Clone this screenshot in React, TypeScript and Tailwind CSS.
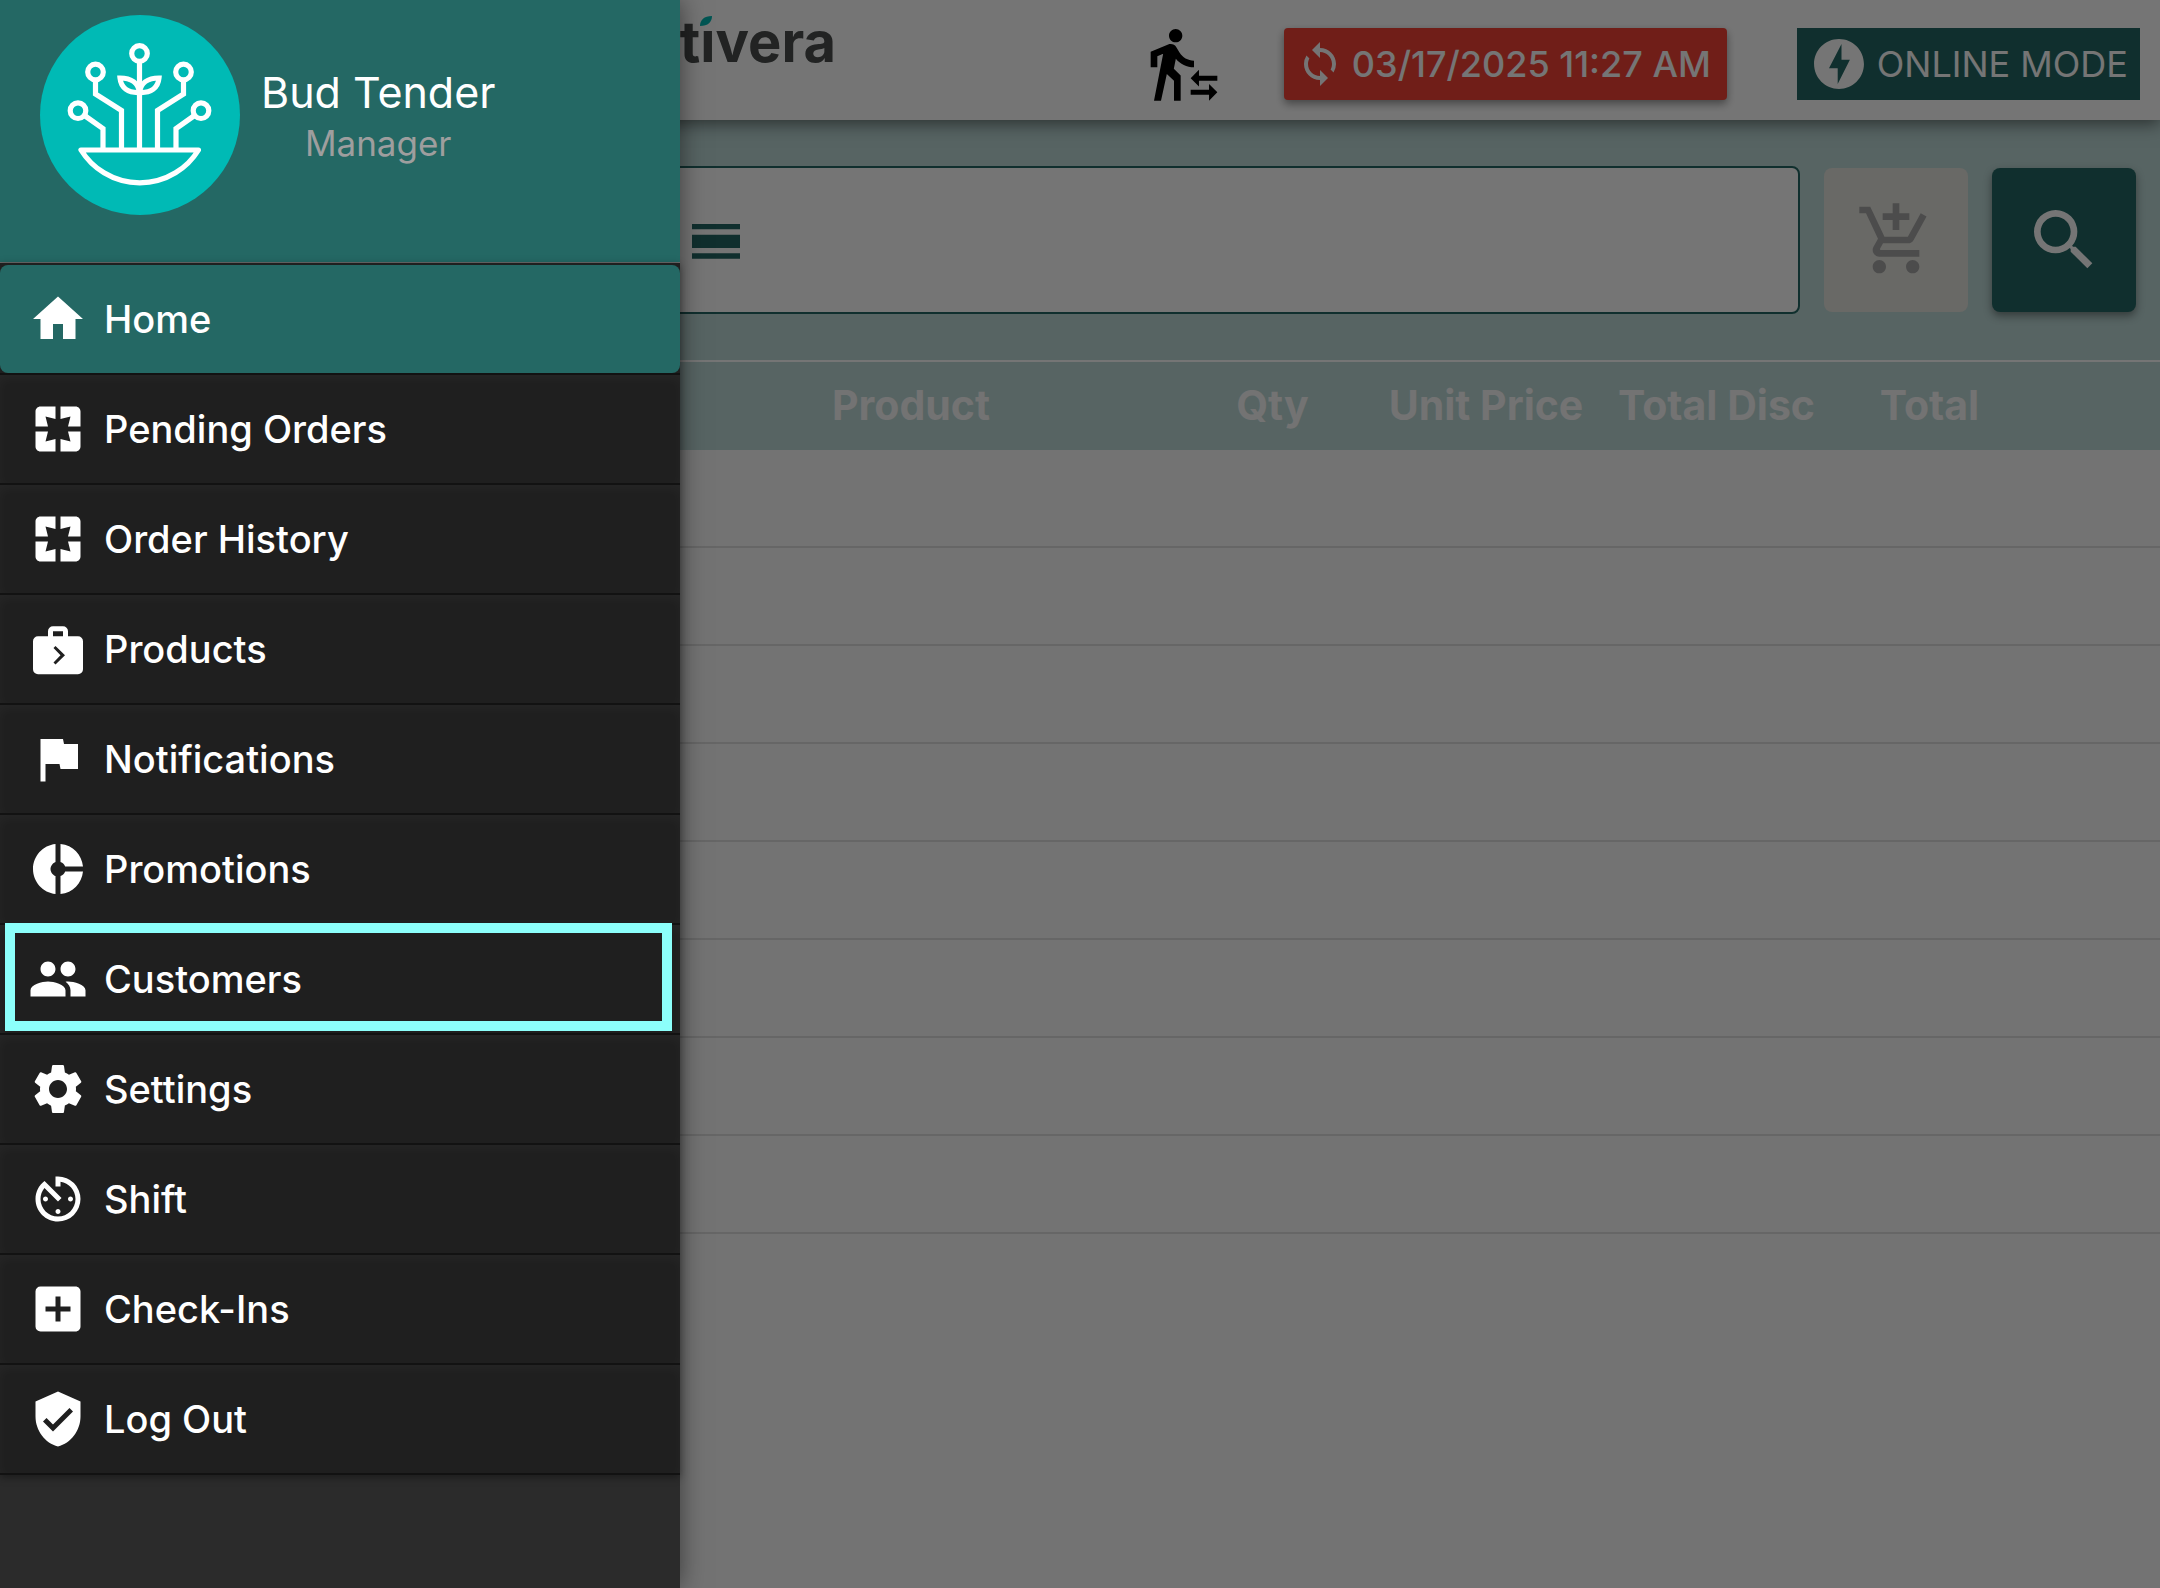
import { FC } from "react";
import { IconType } from "react-icons";
import {
  MdAddBox,
  MdAddShoppingCart,
  MdAvTimer,
  MdDonutSmall,
  MdFlag,
  MdGroup,
  MdHome,
  MdOfflineBolt,
  MdPages,
  MdSearch,
  MdSettings,
  MdSync,
  MdTransferWithinAStation,
  MdVerifiedUser,
} from "react-icons/md";

const ProductsIcon: FC<{ className?: string }> = ({ className }) => (
  <svg viewBox="0 0 24 24" fill="currentColor" className={className}>
    <path
      fillRule="evenodd"
      d="M10 2.9h4a2 2 0 0 1 2 2v2h4a2 2 0 0 1 2 2v11.2a2 2 0 0 1-2 2H4a2 2 0 0 1-2-2V8.9a2 2 0 0 1 2-2h4v-2a2 2 0 0 1 2-2zm0 2v2h4v-2zm1 5.9-.8.8 2.8 2.9-2.8 2.9.8.8 3.8-3.7z"
    />
  </svg>
);

const menu: { label: string; icon: IconType | FC<{ className?: string }> }[] = [
  { label: "Home", icon: MdHome },
  { label: "Pending Orders", icon: MdPages },
  { label: "Order History", icon: MdPages },
  { label: "Products", icon: ProductsIcon },
  { label: "Notifications", icon: MdFlag },
  { label: "Promotions", icon: MdDonutSmall },
  { label: "Customers", icon: MdGroup },
  { label: "Settings", icon: MdSettings },
  { label: "Shift", icon: MdAvTimer },
  { label: "Check-Ins", icon: MdAddBox },
  { label: "Log Out", icon: MdVerifiedUser },
];

const rows = [1, 2, 3, 4, 5, 6, 7, 8];

const Avatar: FC = () => (
  <svg viewBox="0 0 200 200" className="size-[200px] shrink-0">
    <circle cx="100" cy="100" r="100" fill="#00bab5" />
    <g fill="none" stroke="#fff" strokeWidth="5.2">
      <circle cx="99.5" cy="38.5" r="7.8" />
      <circle cx="55.5" cy="57" r="7.8" />
      <circle cx="143.5" cy="57" r="7.8" />
      <circle cx="38" cy="95.7" r="7.8" />
      <circle cx="161" cy="95.7" r="7.8" />
      <path d="M99.5 46v88M55.5 65v14l26 16.5v39M143.5 65v14l-26 16.5v39M44.5 100.5l18.5 13v21M154.5 100.5l-18.5 13v21" />
      <path d="M99.5 77.500c-1-9-8-14.5-19.5-14.5 1 10 8 15 19.5 14.5zM99.5 77.5c1-9 8-14.5 19.5-14.5-1 10-8 15-19.5 14.5z" />
      <path d="M41 135h117.5a69 69 0 0 1-117.5 0z" strokeLinejoin="round" />
    </g>
  </svg>
);

const Drawer: FC = () => (
  <aside className="absolute inset-y-0 left-0 w-[680px] bg-[#2b2b2b] text-white shadow-[0_0_24px_rgba(0,0,0,0.5)]">
    <div className="flex h-[263px] items-start gap-[21px] border-b border-[#6b6b6b] bg-[#246864] pt-[15px] pl-10">
      <Avatar />
      <div className="pt-[51px] text-center">
        <div className="text-[43px] leading-[52px]">Bud Tender</div>
        <div className="text-[35px] leading-[50px] text-[#9e9e9e]">Manager</div>
      </div>
    </div>
    <nav className="bg-[#1f1f1f] pt-[2px] shadow-[0_2px_8px_rgba(0,0,0,0.4)]">
      {menu.map(({ label, icon: Icon }) => (
        <a
          key={label}
          href="#"
          className="relative block border-b-2 border-[#121212]"
        >
          <span
            className={
              label === "Home"
                ? "flex h-[108px] items-center rounded-lg bg-[#246864] pl-7"
                : "flex h-[108px] items-center pl-7 shadow-[inset_0_4px_12px_rgba(255,255,255,0.03)]"
            }
          >
            <Icon className="size-[60px]" />
            <span className="ml-4 text-[38px] font-medium">{label}</span>
          </span>
          {label === "Customers" && (
            <span className="absolute -top-[2px] right-2 bottom-[2px] left-[5px] border-[10px] border-[#8cfffb]" />
          )}
        </a>
      ))}
    </nav>
  </aside>
);

const Logo: FC = () => (
  <div className="mr-auto flex h-[84px] w-[836px] items-center justify-end text-[56px] font-bold text-[#4a4e4d]">
    <span>
      Cult
      <span className="relative">
        ı
        <svg viewBox="0 0 12 10" className="absolute top-2 left-0 h-[10px] w-3">
          <path d="M0 10C0 4 4 0 12 0c0 6-4 10-12 10z" fill="#00bab5" />
        </svg>
      </span>
      vera
    </span>
  </div>
);

const Header: FC = () => (
  <header className="relative flex h-[120px] items-start bg-white pr-5 shadow-[0_4px_16px_rgba(0,0,0,0.5)]">
    <Logo />
    <MdTransferWithinAStation className="mt-6 mr-[60px] size-20 text-black" />
    <button className="mt-7 mr-[70px] flex h-[72px] items-center gap-2 rounded bg-[#f44336] pr-4 pl-3 text-[36px] font-medium text-white shadow-[0_4px_8px_rgba(0,0,0,0.4)]">
      <MdSync className="size-12" />
      03/17/2025 11:27 AM
    </button>
    <div className="mt-7 flex h-[72px] items-center gap-2 bg-[#246864] px-3 text-[36px] text-white">
      <MdOfflineBolt className="size-[60px]" />
      ONLINE MODE
    </div>
  </header>
);

const App: FC = () => {
  return (
    <div className="relative min-h-screen bg-[#fafafa] font-['Inter',sans-serif]">
      <Header />
      <div className="flex h-60 items-start gap-6 bg-[#bdd9d7] px-6 pt-[46px]">
        <div className="flex h-[148px] flex-1 items-center rounded-lg border-2 border-[#246864] bg-white pl-[658px]">
          <svg viewBox="0 0 24 24" className="size-16 text-[#246864]">
            <path d="M3 6h18v2H3zM3 10h18v5H3zM3 17h18v2H3z" fill="currentColor" />
          </svg>
          <input
            aria-label="Search products"
            className="min-w-0 flex-1 outline-none"
          />
        </div>
        <button
          aria-label="Add to cart"
          className="mt-[2px] flex size-36 items-center justify-center rounded-lg bg-[#e4e4de] text-[#a6a6a6]"
        >
          <MdAddShoppingCart className="size-20" />
        </button>
        <button
          aria-label="Search"
          className="mt-[2px] flex size-36 items-center justify-center rounded-lg bg-[#246864] text-white shadow-[0_4px_8px_rgba(0,0,0,0.4)]"
        >
          <MdSearch className="size-20" />
        </button>
      </div>
      <table className="w-full table-fixed border-separate border-spacing-0">
        <thead>
          <tr className="h-[90px] bg-[#bdd9d7] text-[41px] whitespace-nowrap text-[#fafafa] [&>th]:border-t-2 [&>th]:border-white [&>th]:p-0">
            <th />
            <th className="w-[518px]">Product</th>
            <th className="w-[205px]">Qty</th>
            <th className="w-[222px]">Unit Price</th>
            <th className="w-[239px]">Total Disc</th>
            <th className="w-[187px]">Total</th>
            <th className="w-[137px]" />
          </tr>
        </thead>
        <tbody>
          {rows.map((row) => (
            <tr key={row}>
              <td colSpan={7} className="h-[98px] border-b-2 border-[#dedede]" />
            </tr>
          ))}
        </tbody>
      </table>
      <div className="absolute inset-0 bg-black/54" />
      <Drawer />
    </div>
  );
};

export default App;
